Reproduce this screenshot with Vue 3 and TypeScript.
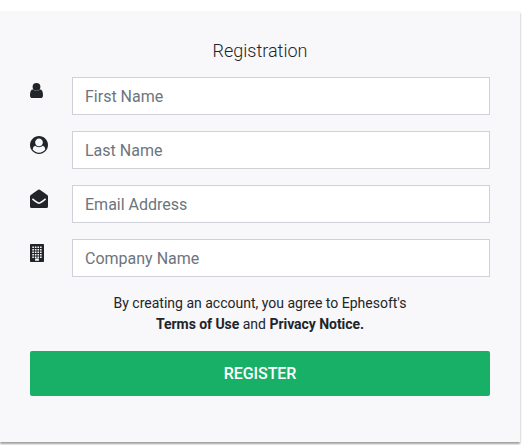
<script setup lang="ts">
import { ref } from 'vue'

interface Field {
  name: string
  label: string
  type: string
  width: number
  viewBox: string
  path: string
}

const fields: Field[] = [
  {
    name: 'firstName',
    label: 'First Name',
    type: 'text',
    width: 13,
    viewBox: '0 0 13 18',
    path: 'M6.5 .9A3.9 3.9 0 0 1 6.5 8.7A3.9 3.9 0 0 1 6.5 .9ZM3.1 7.5Q4.6 9 6.5 9T9.9 7.5Q13 7.4 13 13.2Q13 16 10.8 16H2.2Q0 16 0 13.2Q0 7.4 3.1 7.5Z',
  },
  {
    name: 'lastName',
    label: 'Last Name',
    type: 'text',
    width: 18,
    viewBox: '0 0 1792 1792',
    path: 'M1523 1339q-22-155-87.5-257.5t-184.5-118.5q-67 74-159.5 115.5t-195.5 41.5-195.5-41.5-159.5-115.5q-119 16-184.5 118.5t-87.5 257.5q106 150 271 237.5t356 87.5 356-87.5 271-237.5zm-243-699q0-159-112.5-271.5t-271.5-112.5-271.5 112.5-112.5 271.5 112.5 271.5 271.5 112.5 271.5-112.5 112.5-271.5zm512 256q0 182-71 347.5t-190.5 286-285.5 191.5-349 71q-182 0-348-71t-286-191-191-286-71-348 71-348 191-286 286-191 348-71 348 71 286 191 191 286 71 348z',
  },
  {
    name: 'email',
    label: 'Email Address',
    type: 'email',
    width: 18,
    viewBox: '0 0 18 18',
    path: 'M0 6.2Q0 5.6 .5 5.2Q3.5 2.8 7.1.4Q8.3-.4 9-.4T10.9.4Q14.5 2.8 17.5 5.2Q18 5.6 18 6.2V16.4Q18 18 16.4 18H1.6Q0 18 0 16.4ZM2.9 8.2L1.9 9.4Q4.6 11.7 7.1 13.3Q8.3 14.1 9 14.1T10.9 13.3Q13.4 11.7 16.1 9.4L15.1 8.2Q12.6 10.3 10.3 11.8Q9.4 12.3 9 12.3T7.7 11.8Q5.4 10.3 2.9 8.2Z',
  },
  {
    name: 'company',
    label: 'Company Name',
    type: 'text',
    width: 14,
    viewBox: '0 0 1408 1792',
    path:
      'M64 0H1344Q1408 0 1408 64V1728Q1408 1792 1344 1792H64Q0 1792 0 1728V64Q0 0 64 0ZM512 1440V1664H896V1440Z' +
      [240, 496, 752, 1008, 1240]
        .map((y) =>
          [230, 490, 750, 1010]
            .map((x) => `M${x} ${y}h160v150h-160z`)
            .join(''),
        )
        .join(''),
  },
]

const values = ref<Record<string, string>>({
  firstName: '',
  lastName: '',
  email: '',
  company: '',
})
</script>

<template>
  <main class="page">
    <form class="card" @submit.prevent>
      <h1 class="title">Registration</h1>
      <div class="fields">
        <div v-for="field in fields" :key="field.name" class="field">
          <span class="icon">
            <svg :width="field.width" height="18" :viewBox="field.viewBox" aria-hidden="true">
              <path :d="field.path" fill="currentColor" fill-rule="evenodd" />
            </svg>
          </span>
          <input v-model="values[field.name]" class="input" :type="field.type" :placeholder="field.label" />
        </div>
      </div>
      <p class="terms">
        By creating an account, you agree to Ephesoft's<br />
        <b>Terms of Use</b> and <b>Privacy Notice.</b>
      </p>
      <button class="submit" type="submit">REGISTER</button>
    </form>
  </main>
</template>

<style>
body {
  background: #fff;
}
</style>

<style scoped>
.page {
  box-sizing: border-box;
  height: 445px;
  padding: 11px 2px 3px 0;
  overflow: hidden;
  font-family: Roboto, 'Liberation Sans', sans-serif;
  color: #212529;
}
.card {
  box-sizing: border-box;
  height: 431px;
  padding: 27px 30px 0;
  background: #f8f7fa;
  box-shadow: 0 2px 2px rgba(0, 0, 0, 0.38);
}
.title {
  margin: 0;
  font-size: 18px;
  font-weight: 300;
  line-height: 25px;
  text-align: center;
}
.fields {
  display: flex;
  flex-direction: column;
  gap: 16px;
  margin-top: 14px;
}
.field {
  display: flex;
  height: 38px;
}
.icon {
  flex: 0 0 42px;
  padding-top: 5px;
}
.icon svg {
  display: block;
  overflow: visible;
}
.input {
  box-sizing: border-box;
  flex: 1;
  min-width: 0;
  height: 38px;
  padding: 6px 12px;
  border: 1px solid #d0d0d9;
  border-radius: 0;
  outline: none;
  background: #fff;
  font: 400 16px/24px Roboto, 'Liberation Sans', sans-serif;
  color: #495057;
}
.input::placeholder {
  color: #6c757d;
  opacity: 1;
}
.terms {
  margin: 16px 0 0;
  font-size: 14px;
  line-height: 21px;
  text-align: center;
}
.terms b {
  font-weight: 700;
  letter-spacing: -0.05px;
}
.submit {
  display: block;
  width: 100%;
  height: 45px;
  margin-top: 16px;
  padding: 0;
  border: 0;
  border-radius: 2px;
  background: #18b067;
  color: #fff;
  font: 500 16px/45px Roboto, 'Liberation Sans', sans-serif;
  letter-spacing: -0.05px;
}
</style>
